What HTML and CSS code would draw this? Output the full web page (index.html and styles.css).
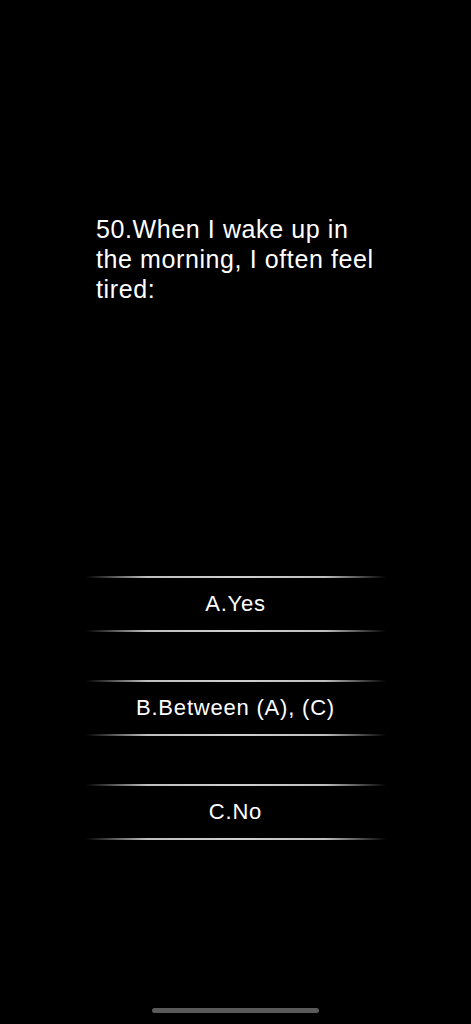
FILE: index.html
```html
<!DOCTYPE html>
<html>
  <head>
    <title>question 50</title>
    <link rel="stylesheet" href="styles.css">
  </head>
  <body>
    <div class="screen">
      <p class="question">50.When I wake up in the morning, I often feel tired:</p>

      <div class="answers">
        <div class="answer">A.Yes</div>
        <div class="answer">B.Between (A), (C)</div>
        <div class="answer">C.No</div>
      </div>

      <div class="home-bar"></div>
    </div>
  </body>
</html>
```

FILE: styles.css
```css
body {
  background-color: #000;
  margin: 0;
  font-family: "Liberation Sans", Arial, sans-serif;
  color: white;
}

.screen {
  display: flex;
  flex-direction: column;
  height: 1024px;
  box-sizing: border-box;
}

.question {
  margin: 0;
  padding: 214px 0 0 96px;
  width: 288px;
  font-size: 25px;
  letter-spacing: 0.6px;
  line-height: 30px;
}

.answers {
  display: flex;
  flex-direction: column;
  gap: 48px;
  width: 300px;
  margin: 272px auto 0;
}

.answer {
  position: relative;
  height: 56px;
  display: flex;
  justify-content: center;
  align-items: center;
  font-size: 22px;
  letter-spacing: 0.8px;
}

/* faded rules above and below each answer */
.answer::before,
.answer::after {
  content: "";
  position: absolute;
  left: 0;
  right: 0;
  height: 2px;
  background: linear-gradient(to right, rgba(200, 200, 200, 0), #bdbdbd 20%, #d0d0d0 50%, #bdbdbd 80%, rgba(200, 200, 200, 0));
}

.answer::before {
  top: 0;
}

.answer::after {
  bottom: 0;
}

.home-bar {
  width: 167px;
  height: 5px;
  border-radius: 3px;
  background: #5a5a5a;
  margin: auto auto 11px;
}
```
